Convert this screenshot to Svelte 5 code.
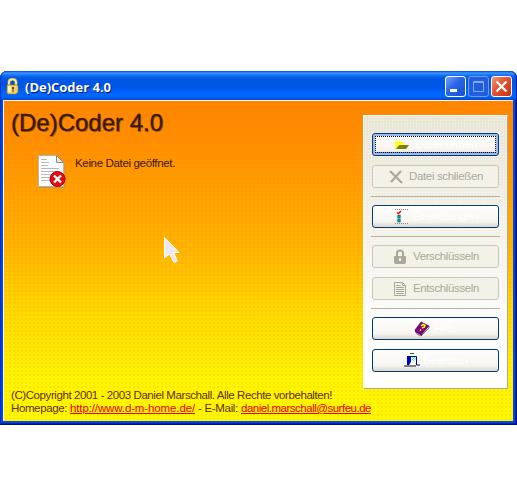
<script>
  const groups = [
    [
      { icon: 'folder', label: 'Datei öffnen', state: 'focus', w: 62, gap: 6 },
      { icon: 'cross', label: 'Datei schließen', state: 'off', w: 74, gap: 5 }
    ],
    [{ icon: 'options', label: 'Einstellungen', state: 'on', w: 66, gap: 4 }],
    [
      { icon: 'lock', label: 'Verschlüsseln', state: 'off', w: 66, gap: 5 },
      { icon: 'page', label: 'Entschlüsseln', state: 'off', w: 66, gap: 5 }
    ],
    [
      { icon: 'book', label: 'Hilfe', state: 'on', w: 23, gap: 4 },
      { icon: 'door', label: 'Beenden', state: 'on', w: 44, gap: 4 }
    ]
  ];

  // Spreads a line of text over a fixed width through its letter spacing.
  function fit(node, width) {
    const natural = node.getBoundingClientRect().width;
    node.style.letterSpacing = (width - natural) / node.textContent.length + 'px';
  }
</script>

<div class="window">
  <header>
    <svg class="keylock" width="14" height="17" viewBox="0 0 14 17">
      <path d="M3 8V4Q3 1 6.5 1T10 4V8" fill="none" stroke="#a89040" stroke-width="3" />
      <path d="M3 8V4Q3 1.300 6.500 1.300T10 4V8" fill="none" stroke="#fff0a0" stroke-width="1.700" />
      <path d="M1 7h10l1 1v6l-2 2H2l-1-1z" fill="#f4d068" stroke="#9a7828" stroke-width=".7" />
      <path d="M2 8h3v6H2z" fill="#fff3b5" />
      <path d="M6 9h2v2h-.5v3h-1v-3H6z" fill="#5c4618" />
    </svg>
    <span class="title"><span use:fit={86}>(De)Coder 4.0</span></span>
    <div class="controls">
      <i class="ctl"><svg width="21" height="21"><path d="M5 13h7v3H5z" fill="#fff" /></svg></i>
      <i class="ctl dim"><svg width="21" height="21"><path d="M5.500 5.500h10v10h-10zM5 6.500h11" fill="none" stroke="#86a8f8" /></svg></i>
      <i class="ctl close"><svg width="21" height="21"><path d="M5.500 5.500l10 10M15.500 5.500l-10 10" stroke="#fff" stroke-width="2.300" /></svg></i>
    </div>
  </header>

  <main>
    <section>
      <h1><span use:fit={152}>(De)Coder 4.0</span></h1>
      <div class="status">
        <svg width="30" height="33" viewBox="0 0 30 33">
          <path d="M.5.500h18l7 7v24H.5z" fill="#fff" stroke="#b8b4b4" />
          <path d="M18.500.500v7h7z" fill="#e8e8f0" stroke="#888" />
          <path d="M3 4.500h6M3 7.500h8M3 10.500h7M3 13.500h18M3 16.500h17M3 19.500h12M3 22.500h10M3 25.500h10" stroke="#b9b9bd" />
          <path d="M1 32.500h26V9" fill="none" stroke="#b48c58" opacity=".6" />
          <circle cx="19.500" cy="24" r="7.500" fill="#e80c14" stroke="#a00008" />
          <path d="M16 20.500l7 7M23 20.500l-7 7" stroke="#fff" stroke-width="2.400" />
        </svg>
        <span use:fit={100}>Keine Datei geöffnet.</span>
      </div>
      <footer>
        <p><span use:fit={321}>(C)Copyright 2001 - 2003 Daniel Marschall. Alle Rechte vorbehalten!</span></p>
        <p class="links">
          <span use:fit={56}>Homepage:</span>
          <a href="#home" use:fit={125}>http://www.d-m-home.de/</a>
          <span use:fit={40}>- E-Mail:</span>
          <a href="#mail" use:fit={130}>daniel.marschall@surfeu.de</a>
        </p>
      </footer>
    </section>

    <aside>
      {#each groups as group, g}
        {#if g > 0}<hr />{/if}
        <div class="group">
          {#each group as b}
            <div class="btn {b.state}" style="--gap: {b.gap}px">
              <svg width="16" height="16" viewBox="0 0 16 16">
                {#if b.icon === 'folder'}
                  <path d="M1 4h4l1 1h4v3H5l-3 4H1z" fill="#ffff20" />
                  <path d="M5 8h10l-3 4H2z" fill="#808000" />
                {:else if b.icon === 'cross'}
                  <path d="M2 2l12 12M13 2L3 13" stroke="#aca899" stroke-width="2.200" />
                {:else if b.icon === 'options'}
                  <path d="M2 0.500h13M2 14.500h13" stroke="#888" stroke-dasharray="1 1" />
                  <path d="M4 3.500l1.500 1L8 2" fill="none" stroke="#f00" stroke-width="1.500" />
                  <path d="M5 6.500h2v2H5zM5 10.500h2v2H5z" fill="#fff" stroke="#008080" stroke-width="1.300" />
                {:else if b.icon === 'lock'}
                  <path d="M5 8V4Q5 1.500 8 1.500T11 4v4" fill="none" stroke="#aca899" stroke-width="2" />
                  <path d="M2 7h12v7l-1 1H3l-1-1z" fill="#aca899" />
                  <path d="M7 9h2v3H7z" fill="#f5f4ee" />
                {:else if b.icon === 'page'}
                  <path d="M2.500 1.500h8l3 3v10h-11zM10.500 1.500v3h3" fill="none" stroke="#aca899" />
                  <path d="M4 4.500h5M4 6.500h8M4 8.500h8M4 10.500h8M4 12.500h8" stroke="#aca899" />
                {:else if b.icon === 'book'}
                  <path d="M1 9l2 4 4 2 8-8V5" fill="#fff" stroke="#777" />
                  <path d="M7 1l8 4-7 8-7-4z" fill="#800080" stroke="#400050" stroke-width=".6" />
                  <path d="M1 9v2l7 4v-2z" fill="#800080" />
                  <path d="M7 5l2-1.500 2 1-.5 1.500L8 7M7 8.500l-1 1" fill="none" stroke="#ff0" stroke-width="1.500" />
                {:else}
                  <path d="M6 .5h4" stroke="#008000" />
                  <path d="M0 12h12v2H0z" fill="#808080" />
                  <path d="M3.500 12V3.500h9V12H16" fill="none" stroke="#0000a0" />
                  <path d="M3 3h4v6l-2 3H3z" fill="#0000d0" />
                  <path d="M7 4h5v8H6l1-3z" fill="#fff" />
                  <path d="M8 4.500h4M8 6.500h4M9 5.500h3M9 7.500h2" stroke="#20e8f8" stroke-dasharray="1 1" />
                {/if}
              </svg>
              <span use:fit={b.w}>{b.label}</span>
            </div>
          {/each}
        </div>
      {/each}
    </aside>
  </main>
</div>

<svg class="pointer" width="19" height="29" viewBox="0 0 19 29">
  <path d="M1.500 1.500V22l5-4 4.500 8.500 3.500-1.500-4-8.500H16z" fill="#e9e9ef" stroke="#fff" />
</svg>

<style>
  :global(body) {
    background: #fff;
  }
  .window {
    box-sizing: border-box;
    width: 517px;
    height: 354px;
    margin-top: 71px;
    padding: 0 4px 4px 3px;
    display: flex;
    flex-direction: column;
    border-radius: 7px 7px 0 0;
    background: #0048e0;
    box-shadow: inset -1px -1px #00107c, inset -2px -2px #0020b0, inset 1px 0 #0030c8;
    font: 11.5px/13px 'Liberation Sans', Arial, sans-serif;
    overflow: hidden;
  }
  header {
    flex: 0 0 29px;
    box-sizing: border-box;
    margin: 0 -4px 0 -3px;
    padding: 5px 5px 0 6px;
    display: flex;
    align-items: flex-start;
    border-radius: 7px 7px 0 0;
    background: linear-gradient(#0048c8 0, #3d96ff 2px, #1874f5 4px, #0058e6 7px, #0055e5 16px, #0066ff 22px, #0064fa 26px, #0048d0 29px);
    box-shadow: inset -1px 0 #0020a0, inset 1px 0 #0038c8;
  }
  .keylock {
    margin-top: 2px;
  }
  .title {
    margin: 3px 0 0 5px;
    flex: 1;
    color: #fff;
    font: bold 13px/16px 'Open Sans', sans-serif;
    text-shadow: 1px 1px #001c80;
  }
  .title span,
  h1 span {
    display: inline-block;
    white-space: nowrap;
  }
  .controls {
    display: flex;
    gap: 2px;
  }
  .ctl {
    box-sizing: border-box;
    width: 21px;
    height: 21px;
    border: 1px solid #fff;
    border-radius: 3px;
    background: linear-gradient(135deg, #7ba0f5, #2864e8 45%, #1850d0);
  }
  .ctl svg {
    display: block;
    margin: -1px;
  }
  .dim {
    border-color: #6c9bf8;
    background: #1f5fdf;
  }
  .close {
    background: linear-gradient(135deg, #f09878, #e35230 45%, #cc3010);
  }
  main {
    flex: 1;
    display: flex;
    box-sizing: border-box;
    border: solid #fff3d8;
    border-width: 1px 0 0 1px;
    background:
      radial-gradient(circle, #ff780035 0.600px, transparent 0.900px) 0 0 / 4px 4px,
      linear-gradient(#ff8500 0, #ff8e00 40px, #ffb300 145px, #ffd800 210px, #fff400 275px, #fff700 100%);
  }
  section {
    flex: 1;
    min-width: 0;
    display: flex;
    flex-direction: column;
    padding: 7px 0 6px 7px;
  }
  h1 {
    margin: 0;
    color: #3c1800;
    font: 24px/30px 'Liberation Sans', Arial, sans-serif;
    -webkit-text-stroke: 0.400px #3c1800;
    text-shadow: 1px 1px #70380080;
  }
  .status {
    display: flex;
    margin: 17px 0 0 27px;
    gap: 7px;
    color: #3c1800;
    line-height: 16px;
  }
  .status span,
  footer span,
  footer a {
    flex: none;
    align-self: flex-start;
    white-space: nowrap;
  }
  footer {
    margin-top: auto;
    color: #603000;
  }
  footer p {
    margin: 0;
    display: flex;
  }
  .links {
    gap: 3px;
  }
  footer a {
    color: #f00000;
  }
  aside {
    flex: none;
    box-sizing: border-box;
    width: 145px;
    height: 274px;
    margin: 14px 5px 0 0;
    padding: 17px 8px 0;
    border: solid #fff;
    border-width: 1px;
    border-right-color: #aca899;
    border-bottom-color: #aca899;
    background:
      radial-gradient(circle, #ffffff90 0.600px, transparent 0.900px) 0 0 / 3px 3px,
      linear-gradient(#e9e6d6, #f5f4ed 50%, #fff 88%);
  }
  .group {
    display: flex;
    flex-direction: column;
    gap: 9px;
  }
  hr {
    height: 1px;
    margin: 8px -1px;
    border: 0;
    background: #b5b1a4;
  }
  .btn {
    box-sizing: border-box;
    height: 23px;
    display: flex;
    align-items: center;
    justify-content: center;
    gap: var(--gap);
    border: 1px solid #003c74;
    border-radius: 3px;
    background: linear-gradient(#fff, #f5f4ef 75%, #dcd6cc);
    color: #fff;
    white-space: nowrap;
  }
  .btn span,
  .btn svg {
    flex: none;
  }
  .off {
    border-color: #c9c7ba;
    background: #f3f2e9;
    color: #aca899;
  }
  .focus {
    box-shadow: inset 0 0 0 2px #9cb8ee, inset 0 -3px #7894dd;
    outline: 1px dotted #000;
    outline-offset: -4px;
  }
  .pointer {
    position: absolute;
    left: 163px;
    top: 236px;
  }
</style>
